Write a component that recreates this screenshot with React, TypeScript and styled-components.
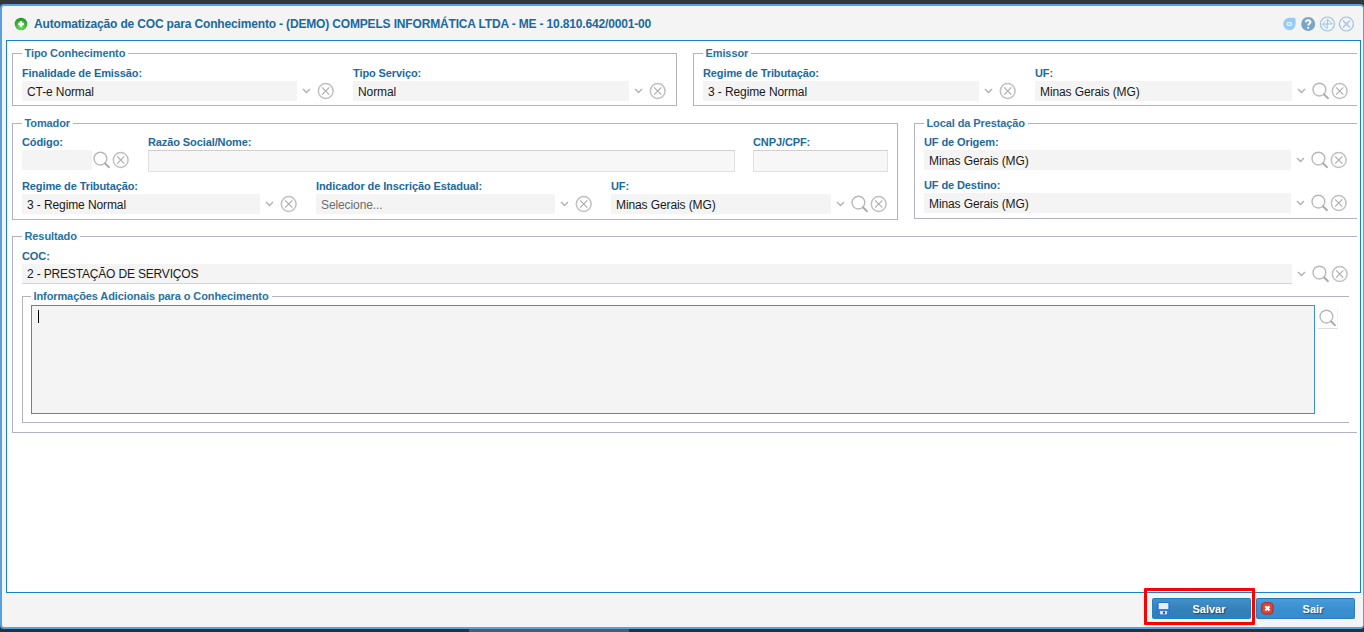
import React from 'react';
import styled, { createGlobalStyle } from 'styled-components';

const GlobalStyle = createGlobalStyle`
  * { box-sizing: border-box; }
  html, body { margin: 0; padding: 0; overflow: hidden; }
  body { background: #34373b; font-family: "Liberation Sans", Arial, sans-serif; font-size: 12px; color: #1a1a1a; }
  svg { flex: none; }
`;

const Desktop = styled.div`
  width: 1364px;
  height: 632px;
  padding-top: 4px;
  display: flex;
  flex-direction: column;
  background: linear-gradient(#33363a 0 50%, #24323a 50% 100%);
`;

const Window = styled.section`
  height: 625px;
  flex: none;
  display: flex;
  flex-direction: column;
  background: #f4f4f4;
  border: 2px solid #5b9fde;
  border-right-width: 1px;
  border-radius: 4px;
`;

const TaskStrip = styled.div`
  height: 3px;
  width: 160px;
  margin-left: 469px;
  background: #505b63;
`;

const TitleBar = styled.header`
  height: 34px;
  flex: none;
  display: flex;
  align-items: center;
  padding: 1px 9px 0 12px;
`;

const Title = styled.h1`
  margin: 0 auto 0 6px;
  font-size: 12px;
  font-weight: bold;
  line-height: 16px;
  letter-spacing: -0.162px;
  color: #1b699f;
  white-space: nowrap;
`;

const WindowTools = styled.div`
  display: flex;
  gap: 3px;
`;

const Panel = styled.main`
  height: 553px;
  flex: none;
  margin: 0 2px 0 4px;
  padding: 12px 3px 0 5px;
  border: 1px solid #1a80cc;
  background: #fff;
  display: flex;
  flex-direction: column;
`;

const GroupRow = styled.div<{ $mb: number }>`
  display: flex;
  align-items: flex-start;
  gap: 16px;
  margin-bottom: ${(p) => p.$mb}px;
`;

const Group = styled.div<{ $w?: number; $h: number; $open?: boolean; $inset?: number; $mt?: number }>`
  ${(p) => (p.$w ? `width: ${p.$w}px; flex: none;` : 'flex: 1;')}
  height: ${(p) => p.$h}px;
  margin-top: ${(p) => p.$mt ?? 0}px;
  padding-left: ${(p) => p.$inset ?? 9}px;
  border: 1px solid #b1b3c5;
  ${(p) => p.$open && 'border-right: 0;'}
`;

const Legend = styled.div<{ $mb: number }>`
  width: fit-content;
  margin: -8px 0 ${(p) => p.$mb}px;
  padding: 0 3px 0 2.5px;
  background: #fff;
  color: #2672a5;
  font-size: 11px;
  font-weight: bold;
  line-height: 14px;
  letter-spacing: -0.1px;
  white-space: nowrap;
`;

const FieldRow = styled.div<{ $mb?: number }>`
  display: flex;
  gap: 18px;
  margin-bottom: ${(p) => p.$mb ?? 0}px;
`;

const Label = styled.label`
  display: block;
  height: 15px;
  font-size: 11px;
  font-weight: bold;
  line-height: 15px;
  letter-spacing: -0.1px;
  color: #1b699f;
  white-space: nowrap;
`;

const Control = styled.div`
  display: flex;
`;

const Value = styled.div<{ $w: number; $muted?: boolean; $line?: boolean }>`
  width: ${(p) => p.$w}px;
  height: 20px;
  padding-left: 5px;
  line-height: ${(p) => (p.$line ? 21 : 23)}px;
  letter-spacing: ${(p) => (p.$line ? -0.17 : -0.1)}px;
  background: #f4f4f4;
  color: ${(p) => (p.$muted ? '#6d6d6d' : '#1a1a1a')};
  white-space: nowrap;
  ${(p) => p.$line && 'border-bottom: 1px solid #d5d5d5;'}
`;

const TextInput = styled.div<{ $w: number }>`
  width: ${(p) => p.$w}px;
  height: 22px;
  background: #f7f7f7;
  border: 1px solid #e0e0e0;
  border-top-color: #cfcfcf;
`;

const IconCell = styled.span`
  width: 19px;
  height: 20px;
  display: flex;
  align-items: center;
  justify-content: center;
`;

const NotesRow = styled.div`
  display: flex;
  gap: 3px;
`;

const Notes = styled.div`
  width: 1284px;
  height: 109px;
  padding: 4px 6px;
  border: 1px solid #3c8fc9;
  background: #f4f4f4;
`;

const Caret = styled.div`
  width: 1px;
  height: 13px;
  background: #000;
`;

const NotesSearch = styled.div`
  width: 20px;
  height: 21px;
  margin-top: 3px;
  display: flex;
  align-items: center;
  justify-content: center;
  border-bottom: 1px solid #dcdcdc;
  border-right: 1px solid #f3f3f3;
`;

const Footer = styled.footer`
  flex: 1;
  display: flex;
  justify-content: flex-end;
  gap: 5px;
  padding: 5px 8px 0 0;
`;

const Button = styled.div<{ $active?: boolean }>`
  position: relative;
  width: 99px;
  height: 21px;
  display: flex;
  align-items: center;
  padding-left: 4px;
  border: 1px solid ${(p) => (p.$active ? '#1f83c8' : '#2b7fc0')};
  border-top-color: #1a7cc0;
  border-radius: 2px;
  background: ${(p) =>
    p.$active ? 'linear-gradient(#4590c8, #3480b8 55%, #2f7fba)' : 'linear-gradient(#4a9bd9, #3a8fd0 55%, #358ccf)'};
  color: #fff;
`;

const ButtonText = styled.span`
  flex: 1;
  padding-right: 2px;
  text-align: center;
  font-size: 11px;
  font-weight: bold;
  line-height: 20px;
  text-shadow: 1px 1px 1px rgba(0, 0, 0, 0.45);
`;

const Highlight = styled.span`
  position: absolute;
  left: -9px;
  top: -11px;
  width: 111px;
  height: 37px;
  border: 3px solid #fe0000;
  border-radius: 1px;
`;

const Chevron = () => (
  <IconCell>
    <svg width="9" height="6" viewBox="0 0 9 6" fill="none" stroke="#b0b0b0" strokeWidth="1.4">
      <path d="M1 1 L4.5 4.5 L8 1" />
    </svg>
  </IconCell>
);

const Lens = () => (
  <svg width="19" height="18" viewBox="0 0 19 18" fill="none" stroke="#b7b7b7" strokeLinecap="round">
    <circle cx="8.4" cy="7.6" r="6.4" strokeWidth="1.4" />
    <path d="M12.9 12.3 L17 16.2" strokeWidth="1.9" stroke="#aaaaaa" />
  </svg>
);

const Search = () => (
  <IconCell>
    <Lens />
  </IconCell>
);

const Clear = () => (
  <IconCell>
    <svg width="19" height="18" viewBox="0 0 19 18" fill="none">
      <circle cx="9.7" cy="9" r="7.4" stroke="#c0c0c0" strokeWidth="1.5" />
      <path d="M6.1 5.4 L13.3 12.6 M13.3 5.4 L6.1 12.6" stroke="#ababab" strokeWidth="1.1" />
    </svg>
  </IconCell>
);

type ComboProps = {
  label: string;
  value?: string;
  width: number;
  muted?: boolean;
  line?: boolean;
  chevron?: boolean;
  search?: boolean;
};

const Combo = ({ label, value, width, muted, line, chevron = true, search }: ComboProps) => (
  <div>
    <Label>{label}</Label>
    <Control>
      <Value $w={width} $muted={muted} $line={line}>{value}</Value>
      {chevron && <Chevron />}
      {search && <Search />}
      <Clear />
    </Control>
  </div>
);

const Input = ({ label, width }: { label: string; width: number }) => (
  <div>
    <Label>{label}</Label>
    <TextInput $w={width} />
  </div>
);

const AddIcon = () => (
  <svg width="14" height="14" viewBox="0 0 14 14">
    <defs>
      <radialGradient id="green" cx="0.5" cy="0.75" r="0.7">
        <stop offset="0" stopColor="#6be45a" />
        <stop offset="1" stopColor="#259428" />
      </radialGradient>
    </defs>
    <circle cx="7" cy="7" r="6.3" fill="url(#green)" />
    <path d="M7 4.2 V9.8 M4.2 7 H9.8" stroke="#fff" strokeWidth="2.4" />
  </svg>
);

const ChatIcon = () => (
  <svg width="16" height="16" viewBox="0 0 16 16">
    <path d="M8.5 1.8 H12.6 Q14.6 1.8 14.6 3.8 V8 A6.2 6.2 0 1 1 8.5 1.8 Z" fill="#96cbf3" />
    <rect x="5.9" y="6.5" width="4.8" height="3" rx="1.4" fill="#a9d5f6" stroke="#e9f5fd" strokeWidth="1.1" />
  </svg>
);

const HelpIcon = () => (
  <svg width="16" height="16" viewBox="0 0 16 16" fill="none">
    <circle cx="8.2" cy="8" r="7" fill="#78a5c8" />
    <path d="M5.9 6.2 C5.9 3.6 10.5 3.6 10.5 6.1 C10.5 7.8 8.2 7.8 8.2 9.6" stroke="#fff" strokeWidth="1.9" />
    <circle cx="8.2" cy="11.8" r="1.1" fill="#fff" />
  </svg>
);

const RestoreIcon = () => (
  <svg width="16" height="16" viewBox="0 0 16 16" fill="none" stroke="#98c2e2">
    <circle cx="8.4" cy="8" r="7" strokeWidth="1.2" />
    <path d="M8.6 3.2 V8 H13.4 Z M8.2 12.8 V8 H3.4 Z" strokeWidth="1" />
    <path d="M3.4 8 L8.6 3.2" strokeWidth="0.6" />
  </svg>
);

const CloseIcon = () => (
  <svg width="16" height="16" viewBox="0 0 16 16" fill="none" stroke="#98c2e2">
    <circle cx="8.4" cy="8" r="7" strokeWidth="1.2" />
    <path d="M4.9 4.5 L11.9 11.5 M11.9 4.5 L4.9 11.5" strokeWidth="1.1" />
  </svg>
);

const DiskIcon = () => (
  <svg width="13" height="13" viewBox="0 0 13 13">
    <rect x="0.5" y="0.5" width="12" height="12" rx="0.8" fill="#2f80e6" stroke="#2a6fd8" />
    <rect x="1.7" y="1" width="9.6" height="6" fill="#e8eff8" />
    <rect x="3" y="9" width="7" height="3.3" fill="#dbe6f2" />
    <rect x="6" y="9.6" width="2" height="2" fill="#1d3f7c" />
  </svg>
);

const ExitIcon = () => (
  <svg width="13" height="13" viewBox="0 0 13 13">
    <rect x="0.7" y="0.7" width="11.4" height="11.4" rx="3.4" fill="#dc4638" stroke="#b5281f" />
    <path d="M4.3 4.3 L8.5 8.5 M8.5 4.3 L4.3 8.5" stroke="#fff" strokeWidth="2" />
  </svg>
);

export default function App() {
  return (
    <>
      <GlobalStyle />
      <Desktop>
        <Window>
          <TitleBar>
            <AddIcon />
            <Title>Automatização de COC para Conhecimento - (DEMO) COMPELS INFORMÁTICA LTDA - ME - 10.810.642/0001-00</Title>
            <WindowTools>
              <ChatIcon />
              <HelpIcon />
              <RestoreIcon />
              <CloseIcon />
            </WindowTools>
          </TitleBar>
          <Panel>
            <GroupRow $mb={17}>
              <Group $w={665} $h={53}>
                <Legend $mb={6}>Tipo Conhecimento</Legend>
                <FieldRow>
                  <Combo label="Finalidade de Emissão:" value="CT-e Normal" width={275} />
                  <Combo label="Tipo Serviço:" value="Normal" width={276} />
                </FieldRow>
              </Group>
              <Group $h={53} $open>
                <Legend $mb={6}>Emissor</Legend>
                <FieldRow>
                  <Combo label="Regime de Tributação:" value="3 - Regime Normal" width={276} />
                  <Combo label="UF:" value="Minas Gerais (MG)" width={257} search />
                </FieldRow>
              </Group>
            </GroupRow>
            <GroupRow $mb={16}>
              <Group $w={886} $h={97}>
                <Legend $mb={5}>Tomador</Legend>
                <FieldRow $mb={7}>
                  <Combo label="Código:" width={70} chevron={false} search />
                  <Input label="Razão Social/Nome:" width={587} />
                  <Input label="CNPJ/CPF:" width={135} />
                </FieldRow>
                <FieldRow>
                  <Combo label="Regime de Tributação:" value="3 - Regime Normal" width={238} />
                  <Combo label="Indicador de Inscrição Estadual:" value="Selecione..." width={239} muted />
                  <Combo label="UF:" value="Minas Gerais (MG)" width={220} search />
                </FieldRow>
              </Group>
              <Group $h={96} $open>
                <Legend $mb={5}>Local da Prestação</Legend>
                <FieldRow $mb={8}>
                  <Combo label="UF de Origem:" value="Minas Gerais (MG)" width={367} search />
                </FieldRow>
                <FieldRow>
                  <Combo label="UF de Destino:" value="Minas Gerais (MG)" width={367} search />
                </FieldRow>
              </Group>
            </GroupRow>
            <GroupRow $mb={0}>
              <Group $h={197} $open>
                <Legend $mb={6}>Resultado</Legend>
                <Combo label="COC:" value="2 - PRESTAÇÃO DE SERVIÇOS" width={1270} line search />
                <Group $w={1327} $h={127} $mt={12} $inset={8} $open>
                  <Legend $mb={2}>Informações Adicionais para o Conhecimento</Legend>
                  <NotesRow>
                    <Notes>
                      <Caret />
                    </Notes>
                    <NotesSearch>
                      <Lens />
                    </NotesSearch>
                  </NotesRow>
                </Group>
              </Group>
            </GroupRow>
          </Panel>
          <Footer>
            <Button $active>
              <DiskIcon />
              <ButtonText>Salvar</ButtonText>
              <Highlight />
            </Button>
            <Button>
              <ExitIcon />
              <ButtonText>Sair</ButtonText>
            </Button>
          </Footer>
        </Window>
        <TaskStrip />
      </Desktop>
    </>
  );
}
